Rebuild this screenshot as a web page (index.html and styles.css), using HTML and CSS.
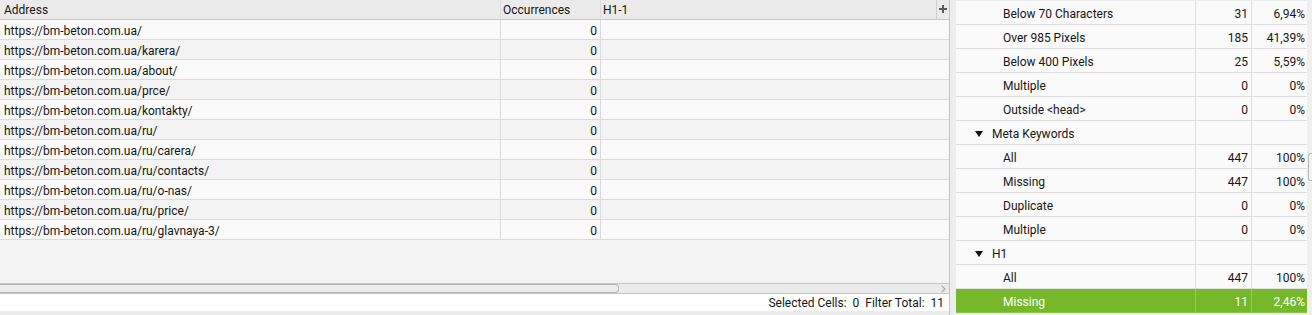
FILE: index.html
```html
<!DOCTYPE html>
<html>
<head>
<meta charset="utf-8">
<link rel="stylesheet" href="styles.css">
</head>
<body>
<div class="app">
  <div class="left">
    <div class="thead">
      <div class="c c-addr">Address</div>
      <div class="c c-occ">Occurrences</div>
      <div class="c c-h1">H1-1</div>
      <div class="c c-plus"><svg width="8" height="8" viewBox="0 0 8 8"><path d="M3 0h2v3h3v2H5v3H3V5H0V3h3z" fill="#5a5a5a"/></svg></div>
    </div>
    <div class="tbody">
      <div class="row"><div class="c c-addr">https://bm-beton.com.ua/</div><div class="c c-occ num">0</div><div class="c c-h1"></div></div>
      <div class="row"><div class="c c-addr">https://bm-beton.com.ua/karera/</div><div class="c c-occ num">0</div><div class="c c-h1"></div></div>
      <div class="row"><div class="c c-addr">https://bm-beton.com.ua/about/</div><div class="c c-occ num">0</div><div class="c c-h1"></div></div>
      <div class="row"><div class="c c-addr">https://bm-beton.com.ua/prce/</div><div class="c c-occ num">0</div><div class="c c-h1"></div></div>
      <div class="row"><div class="c c-addr">https://bm-beton.com.ua/kontakty/</div><div class="c c-occ num">0</div><div class="c c-h1"></div></div>
      <div class="row"><div class="c c-addr">https://bm-beton.com.ua/ru/</div><div class="c c-occ num">0</div><div class="c c-h1"></div></div>
      <div class="row"><div class="c c-addr">https://bm-beton.com.ua/ru/carera/</div><div class="c c-occ num">0</div><div class="c c-h1"></div></div>
      <div class="row"><div class="c c-addr">https://bm-beton.com.ua/ru/contacts/</div><div class="c c-occ num">0</div><div class="c c-h1"></div></div>
      <div class="row"><div class="c c-addr">https://bm-beton.com.ua/ru/o-nas/</div><div class="c c-occ num">0</div><div class="c c-h1"></div></div>
      <div class="row"><div class="c c-addr">https://bm-beton.com.ua/ru/price/</div><div class="c c-occ num">0</div><div class="c c-h1"></div></div>
      <div class="row"><div class="c c-addr">https://bm-beton.com.ua/ru/glavnaya-3/</div><div class="c c-occ num">0</div><div class="c c-h1"></div></div>
    </div>
    <div class="filler"></div>
    <div class="hscroll">
      <div class="thumb"></div>
      <svg class="arrow" width="5" height="8" viewBox="0 0 5 8"><path d="M0.8 0.8L4 4L0.8 7.2" fill="none" stroke="#a8a8a8" stroke-width="1.2"/></svg>
    </div>
    <div class="status">Selected Cells:&nbsp; 0&nbsp; Filter Total:&nbsp; 11</div>
    <div class="bottom"></div>
  </div>
  <div class="gap"></div>
  <div class="right">
    <div class="srow"><div class="s-label child">Below 70 Characters</div><div class="s-num">31</div><div class="s-pct">6,94%</div></div>
    <div class="srow"><div class="s-label child">Over 985 Pixels</div><div class="s-num">185</div><div class="s-pct">41,39%</div></div>
    <div class="srow"><div class="s-label child">Below 400 Pixels</div><div class="s-num">25</div><div class="s-pct">5,59%</div></div>
    <div class="srow"><div class="s-label child">Multiple</div><div class="s-num">0</div><div class="s-pct">0%</div></div>
    <div class="srow"><div class="s-label child">Outside &lt;head&gt;</div><div class="s-num">0</div><div class="s-pct">0%</div></div>
    <div class="srow"><div class="s-label group"><span class="tri"></span>Meta Keywords</div><div class="s-num"></div><div class="s-pct"></div></div>
    <div class="srow"><div class="s-label child">All</div><div class="s-num">447</div><div class="s-pct">100%</div></div>
    <div class="srow"><div class="s-label child">Missing</div><div class="s-num">447</div><div class="s-pct">100%</div></div>
    <div class="srow"><div class="s-label child">Duplicate</div><div class="s-num">0</div><div class="s-pct">0%</div></div>
    <div class="srow"><div class="s-label child">Multiple</div><div class="s-num">0</div><div class="s-pct">0%</div></div>
    <div class="srow"><div class="s-label group"><span class="tri"></span>H1</div><div class="s-num"></div><div class="s-pct"></div></div>
    <div class="srow"><div class="s-label child">All</div><div class="s-num">447</div><div class="s-pct">100%</div></div>
    <div class="srow sel"><div class="s-label child">Missing</div><div class="s-num">11</div><div class="s-pct">2,46%</div></div>
  </div>
  <div class="vstrip"><div class="vthumb"></div></div>
</div>
</body>
</html>
```

FILE: styles.css
```css
* { box-sizing: border-box; }
html, body { margin: 0; padding: 0; }
body {
  width: 1312px;
  height: 315px;
  overflow: hidden;
  background: #ececec;
  font-family: Roboto, "Liberation Sans", Arial, sans-serif;
  font-size: 12px;
  color: #161616;
}
.app {
  display: flex;
  height: 315px;
}
.left {
  width: 950px;
  flex: none;
  display: flex;
  flex-direction: column;
  border-right: 1px solid #c4c4c4;
  background: #f3f3f3;
}
.thead {
  display: flex;
  height: 20px;
  background: #ebebeb;
  border-bottom: 1px solid #c9c9c9;
}
.row {
  display: flex;
  height: 20px;
  border-bottom: 1px solid #dcdcdc;
  background: #fafafa;
}
.row:nth-child(even) { background: #f3f3f3; }
.c {
  line-height: 19px;
  padding: 2px 4px 0;
  white-space: nowrap;
  overflow: hidden;
}
.thead .c { line-height: 19px; padding-top: 1px; }
.c-addr { width: 501px; border-right: 1px solid #dcdcdc; }
.c-occ { width: 100px; border-right: 1px solid #dcdcdc; padding-left: 2px; }
.c-occ.num { text-align: right; padding-right: 3px; }
.c-h1 { flex: 1; padding-left: 2px; }
.thead .c-plus {
  width: 13px;
  flex: none;
  border-left: 1px solid #d0d0d0;
  padding: 5px 0 0;
  display: flex;
  align-items: flex-start;
  justify-content: center;
}
.filler { flex: 1; }
.hscroll {
  height: 11px;
  border-top: 1px solid #c6c6c6;
  border-bottom: 1px solid #c6c6c6;
  background: #ebebeb;
  display: flex;
  align-items: center;
  justify-content: space-between;
  padding-right: 3px;
}
.thumb {
  width: 619px;
  height: 9px;
  border: 1px solid #b5b5b5;
  border-left: none;
  border-radius: 0 4px 4px 0;
  background: #ececec;
}
.arrow { display: block; }
.status {
  height: 17px;
  background: #ffffff;
  text-align: right;
  padding: 2px 5px 0 0;
  line-height: 15px;
  white-space: pre;
}
.bottom { height: 4px; background: #ececec; }
.gap { width: 6px; flex: none; background: #ededed; }
.right {
  width: 351px;
  flex: none;
  padding-top: 1px;
  display: flex;
  flex-direction: column;
  background: #ececec;
}
.srow {
  display: flex;
  height: 24px;
  border-bottom: 1px solid #dedede;
  background: #fafafa;
}
.s-label, .s-num, .s-pct {
  line-height: 23px;
  padding-top: 2px;
  white-space: nowrap;
}
.s-label {
  width: 240px;
  border-right: 1px solid #dedede;
  display: flex;
  align-items: center;
  padding-top: 0;
}
.s-label.child { padding-left: 47px; }
.s-label.group { padding-left: 19px; }
.s-label { padding-top: 4px; line-height: 19px; }
.tri {
  width: 0;
  height: 0;
  border-left: 4px solid transparent;
  border-right: 4px solid transparent;
  border-top: 6px solid #111;
  margin-right: 9px;
  margin-top: -1px;
}
.s-num {
  width: 56px;
  border-right: 1px solid #dedede;
  text-align: right;
  padding-right: 3px;
}
.s-pct {
  flex: 1;
  text-align: right;
  padding-right: 2px;
}
.srow.sel {
  background: #76b82a;
  color: #ffffff;
  border-bottom-color: #8cc44a;
}
.srow.sel .s-label, .srow.sel .s-num { border-right-color: #93c955; }
.vstrip {
  flex: 1;
  background: #efefef;
  padding-top: 153px;
  display: flex;
  justify-content: flex-end;
}
.vthumb {
  width: 4px;
  height: 28px;
  border: 1px solid #b8b8b8;
  border-right: none;
  border-radius: 3px 0 0 3px;
  background: #f4f4f4;
}
```
